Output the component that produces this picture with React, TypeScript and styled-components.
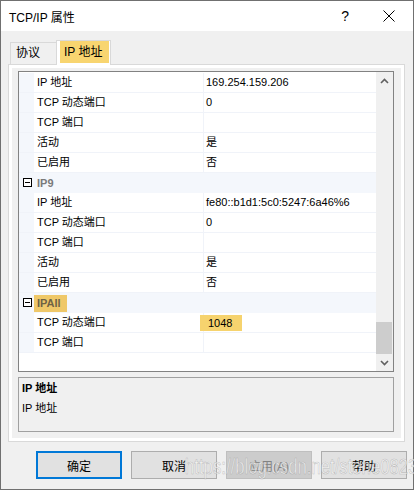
import styled, { createGlobalStyle } from 'styled-components';

const GlobalStyle = createGlobalStyle`
  html, body {
    margin: 0;
    padding: 0;
  }
  body {
    width: 414px;
    height: 490px;
    overflow: hidden;
    background: #f0f0f0;
    font-family: "Liberation Sans", "Noto Sans CJK SC", sans-serif;
  }
  * {
    box-sizing: border-box;
  }
`;

const Window = styled.div`
  position: relative;
  width: 414px;
  height: 490px;
  border: 1px solid #707070;
  background: #f0f0f0;
  display: flex;
  flex-direction: column;
`;

const TitleBar = styled.div`
  height: 30px;
  background: #fff;
  display: flex;
  align-items: center;
  padding-left: 8px;
`;

const TitleText = styled.span`
  flex: 1;
  font-size: 12px;
  color: #000;
`;

const HelpGlyph = styled.span`
  font-size: 14px;
  color: #000;
  margin-right: 17px;
`;

const CloseButton = styled.div`
  width: 46px;
  height: 30px;
  margin-right: 1px;
  display: flex;
  align-items: center;
  justify-content: center;
`;

const Body = styled.div`
  padding: 9px 0 0 7px;
  display: flex;
  flex-direction: column;
`;

const TabStrip = styled.div`
  height: 24px;
  display: flex;
  align-items: flex-end;
`;

const Tab = styled.div`
  margin-left: 2px;
  width: 46px;
  height: 22px;
  border: 1px solid #d9d9d9;
  border-bottom: none;
  border-right: none;
  background: #f0f0f0;
  font-size: 12px;
  line-height: 21px;
  padding-left: 5px;
`;

const ActiveTab = styled.div`
  position: relative;
  z-index: 1;
  width: 55px;
  height: 25px;
  margin-bottom: -1px;
  border: 1px solid #d9d9d9;
  border-bottom: none;
  background: #fff;
  padding: 0 1px 2px 3px;
  display: flex;
`;

const TabMark = styled.div`
  flex: 1;
  background: #f8d570;
  font-size: 12px;
  line-height: 22px;
  padding-left: 4px;
`;

const Panel = styled.div`
  width: 397px;
  height: 378px;
  border: 1px solid #d9d9d9;
  background: #fff;
  padding: 3px;
`;

const PanelInner = styled.div`
  height: 100%;
  background: #f0f0f0;
  padding: 3px 0 0 6px;
  display: flex;
  flex-direction: column;
  gap: 5px;
`;

const Grid = styled.div`
  width: 376px;
  height: 301px;
  border: 1px solid #828282;
  display: flex;
  font-size: 11px;
`;

const RowList = styled.div`
  flex: 1;
  background: #fff;
  padding-top: 1px;
  display: flex;
  flex-direction: column;
`;

const Row = styled.div`
  height: 20px;
  display: flex;
  border-bottom: 1px solid #f0f3f9;
`;

const Gutter = styled.div`
  width: 15px;
  background: #f4f7fc;
  display: flex;
  align-items: center;
  justify-content: center;
`;

const LabelCell = styled.div`
  width: 170px;
  padding-left: 3px;
  border-right: 1px solid #f0f3f9;
  line-height: 19px;
  color: #000;
  white-space: nowrap;
`;

const ValueCell = styled.div`
  flex: 1;
  padding-left: 2px;
  line-height: 19px;
  color: #000;
  white-space: nowrap;
`;

const ValueMark = styled.span`
  display: inline-block;
  margin-left: -6px;
  width: 42px;
  height: 16px;
  margin-top: 2px;
  padding-left: 8px;
  line-height: 16px;
  background: #f6d36e;
`;

const CategoryRow = styled.div`
  height: 20px;
  display: flex;
  background: #f4f7fc;
`;

const CategoryName = styled.div<{ $marked?: boolean }>`
  margin-top: ${(p) => (p.$marked ? '2px' : '0')};
  height: ${(p) => (p.$marked ? '17px' : '20px')};
  line-height: ${(p) => (p.$marked ? '17px' : '20px')};
  padding: 0 ${(p) => (p.$marked ? '6px' : '0')} 0 3px;
  background: ${(p) => (p.$marked ? '#efc869' : 'transparent')};
  font-weight: bold;
  color: ${(p) => (p.$marked ? '#6e6245' : '#7a7a7a')};
`;

const MinusBox = styled.div`
  width: 9px;
  height: 9px;
  margin-left: 2px;
  margin-top: -1px;
  border: 1px solid #000;
  background: #fff;
  display: flex;
  align-items: center;
  justify-content: center;
  &::after {
    content: '';
    width: 5px;
    height: 1px;
    background: #000;
  }
`;

const ScrollBar = styled.div`
  width: 17px;
  background: #f0f0f0;
  display: flex;
  flex-direction: column;
`;

const ScrollArrow = styled.div`
  height: 17px;
  display: flex;
  align-items: center;
  justify-content: center;
`;

const ScrollTrack = styled.div`
  flex: 1;
  display: flex;
  flex-direction: column;
  justify-content: flex-end;
`;

const ScrollThumb = styled.div`
  height: 32px;
  margin: 0 1px 0 0;
  background: #cdcdcd;
`;

const Description = styled.div`
  width: 376px;
  height: 55px;
  border: 1px solid #a0a0a0;
  background: #f0f0f0;
  padding: 3px 3px;
  font-size: 11px;
  color: #000;
`;

const DescTitle = styled.div`
  font-weight: bold;
  line-height: 14px;
`;

const DescText = styled.div`
  margin-top: 6px;
  line-height: 14px;
`;

const ButtonRow = styled.div`
  margin-top: 9px;
  padding-left: 28px;
  display: flex;
  gap: 9px;
`;

const Button = styled.div<{ $primary?: boolean; $disabled?: boolean }>`
  width: 86px;
  height: 28px;
  display: flex;
  align-items: center;
  justify-content: center;
  font-size: 12px;
  border: ${(p) => (p.$primary ? '2px solid #0078d7' : p.$disabled ? '1px solid #bfbfbf' : '1px solid #adadad')};
  background: ${(p) => (p.$disabled ? '#cccccc' : '#e1e1e1')};
  color: ${(p) => (p.$disabled ? '#838383' : '#000')};
`;

const Watermark = styled.div`
  position: absolute;
  left: 184px;
  top: 453px;
  font-family: "Liberation Sans", sans-serif;
  font-size: 22px;
  white-space: nowrap;
  transform: scaleX(0.76);
  transform-origin: left top;
  color: rgba(255, 255, 255, 0.6);
  -webkit-text-stroke: 0.6px rgba(110, 110, 110, 0.4);
  pointer-events: none;
`;

type Prop = { label: string; value?: string; mark?: boolean };

const ip6: Prop[] = [
  { label: 'IP 地址', value: '169.254.159.206' },
  { label: 'TCP 动态端口', value: '0' },
  { label: 'TCP 端口' },
  { label: '活动', value: '是' },
  { label: '已启用', value: '否' },
];

const ip9: Prop[] = [
  { label: 'IP 地址', value: 'fe80::b1d1:5c0:5247:6a46%6' },
  { label: 'TCP 动态端口', value: '0' },
  { label: 'TCP 端口' },
  { label: '活动', value: '是' },
  { label: '已启用', value: '否' },
];

const ipAll: Prop[] = [
  { label: 'TCP 动态端口', value: '1048', mark: true },
  { label: 'TCP 端口' },
];

function PropRow({ label, value, mark }: Prop) {
  return (
    <Row>
      <Gutter />
      <LabelCell>{label}</LabelCell>
      <ValueCell>{mark ? <ValueMark>{value}</ValueMark> : value}</ValueCell>
    </Row>
  );
}

function Category({ name, marked }: { name: string; marked?: boolean }) {
  return (
    <CategoryRow>
      <Gutter>
        <MinusBox />
      </Gutter>
      <CategoryName $marked={marked}>{name}</CategoryName>
    </CategoryRow>
  );
}

function Chevron({ down }: { down?: boolean }) {
  return (
    <svg width="9" height="6" viewBox="0 0 9 6">
      <path
        d={down ? 'M1 1 L4.5 4.5 L8 1' : 'M1 5 L4.5 1.5 L8 5'}
        fill="none"
        stroke="#606060"
        strokeWidth="1.6"
      />
    </svg>
  );
}

export default function App() {
  return (
    <>
      <GlobalStyle />
      <Window>
        <TitleBar>
          <TitleText>TCP/IP 属性</TitleText>
          <HelpGlyph>?</HelpGlyph>
          <CloseButton>
            <svg width="12" height="12" viewBox="0 0 12 12">
              <path d="M0.5 0.5 L11.5 11.5 M11.5 0.5 L0.5 11.5" stroke="#000" strokeWidth="1" />
            </svg>
          </CloseButton>
        </TitleBar>
        <Body>
          <TabStrip>
            <Tab>协议</Tab>
            <ActiveTab>
              <TabMark>IP 地址</TabMark>
            </ActiveTab>
          </TabStrip>
          <Panel>
            <PanelInner>
              <Grid>
                <RowList>
                  {ip6.map((p, i) => (
                    <PropRow key={`a${i}`} {...p} />
                  ))}
                  <Category name="IP9" />
                  {ip9.map((p, i) => (
                    <PropRow key={`b${i}`} {...p} />
                  ))}
                  <Category name="IPAll" marked />
                  {ipAll.map((p, i) => (
                    <PropRow key={`c${i}`} {...p} />
                  ))}
                </RowList>
                <ScrollBar>
                  <ScrollArrow>
                    <Chevron />
                  </ScrollArrow>
                  <ScrollTrack>
                    <ScrollThumb />
                  </ScrollTrack>
                  <ScrollArrow>
                    <Chevron down />
                  </ScrollArrow>
                </ScrollBar>
              </Grid>
              <Description>
                <DescTitle>IP 地址</DescTitle>
                <DescText>IP 地址</DescText>
              </Description>
            </PanelInner>
          </Panel>
          <ButtonRow>
            <Button $primary>确定</Button>
            <Button>取消</Button>
            <Button $disabled>应用(A)</Button>
            <Button>帮助</Button>
          </ButtonRow>
        </Body>
        <Watermark>https://blog.csdn.net/stone0823</Watermark>
      </Window>
    </>
  );
}
